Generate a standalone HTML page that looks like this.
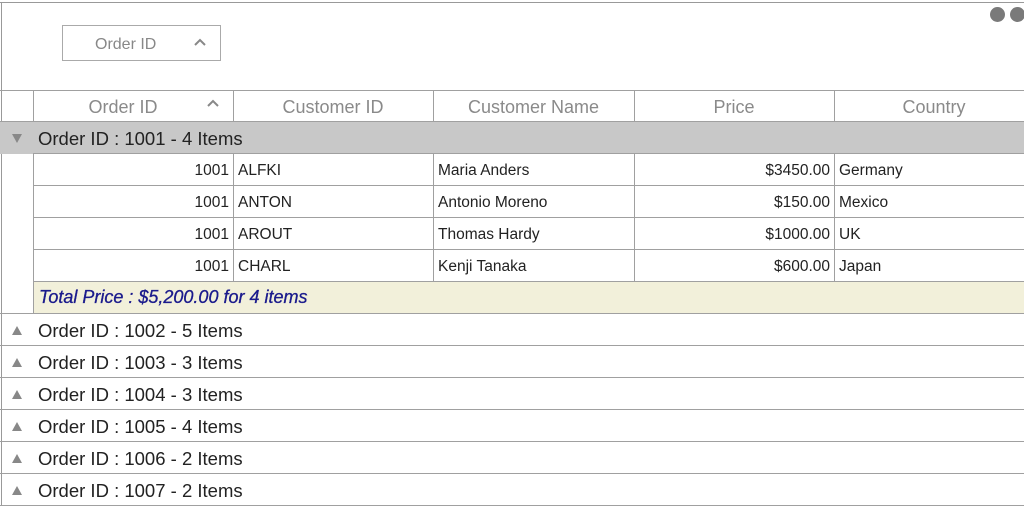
<!DOCTYPE html>
<html><head><style>
*{margin:0;padding:0;box-sizing:border-box}
body{width:1024px;height:506px;overflow:hidden;background:#fff;font-family:"Liberation Sans",sans-serif;position:relative}
.a{position:absolute}
.hl{position:absolute;height:1px;background:#a0a0a0}
.vl{position:absolute;width:1px;background:#a0a0a0}
.h{position:absolute;top:91px;height:32px;line-height:32px;font-size:18px;color:#8a8a8a;text-align:center}
.c{position:absolute;height:32px;line-height:34px;font-size:15.5px;color:#222}
.g{position:absolute;left:0;width:1024px;height:32px;line-height:34px;font-size:18.5px;color:#222}
.g .t{position:absolute;left:38px}
.tri{position:absolute;left:12px;top:12px;width:0;height:0;border-left:5px solid transparent;border-right:5px solid transparent;border-bottom:9px solid #888}
</style></head><body>
<div class="hl" style="top:2px;left:0;width:1024px;background:#999"></div>
<div class="vl" style="left:1px;top:2px;height:504px;background:#999"></div>
<div class="a" style="left:990px;top:7px;width:15px;height:15px;border-radius:50%;background:#7a7a7a"></div>
<div class="a" style="left:1010px;top:7px;width:15px;height:15px;border-radius:50%;background:#7a7a7a"></div>
<div class="a" style="left:62px;top:25px;width:159px;height:36px;border:1px solid #aaa;font-size:16px;color:#888;line-height:37px;padding-left:32px">Order ID</div>
<svg class="a" style="left:193px;top:37px" width="14" height="10"><path d="M2 8L7 3L12 8" stroke="#888" stroke-width="2" fill="none"/></svg>
<div class="hl" style="top:90px;left:0;width:1024px"></div>
<div class="hl" style="top:121px;left:0;width:1024px"></div>
<div class="h" style="left:33px;width:180px">Order ID</div>
<svg class="a" style="left:206px;top:98px" width="14" height="10"><path d="M2 8L7 3L12 8" stroke="#888" stroke-width="2" fill="none"/></svg>
<div class="h" style="left:233px;width:200px">Customer ID</div>
<div class="h" style="left:433px;width:201px">Customer Name</div>
<div class="h" style="left:634px;width:200px">Price</div>
<div class="h" style="left:834px;width:200px">Country</div>
<div class="vl" style="left:33px;top:90px;height:32px"></div>
<div class="vl" style="left:233px;top:90px;height:32px"></div>
<div class="vl" style="left:433px;top:90px;height:32px"></div>
<div class="vl" style="left:634px;top:90px;height:32px"></div>
<div class="vl" style="left:834px;top:90px;height:32px"></div>
<div class="g" style="top:122px;background:#c8c8c8"><div class="tri" style="border-bottom:none;border-top:9px solid #888;top:12px"></div><span class="t">Order ID : 1001 - 4 Items</span></div>
<div class="hl" style="top:153px;left:33px;width:991px"></div>
<div class="vl" style="left:33px;top:154px;height:160px"></div>
<div class="vl" style="left:233px;top:154px;height:128px"></div>
<div class="vl" style="left:433px;top:154px;height:128px"></div>
<div class="vl" style="left:634px;top:154px;height:128px"></div>
<div class="vl" style="left:834px;top:154px;height:128px"></div>
<div class="hl" style="top:185px;left:33px;width:991px"></div>
<div class="hl" style="top:217px;left:33px;width:991px"></div>
<div class="hl" style="top:249px;left:33px;width:991px"></div>
<div class="hl" style="top:281px;left:33px;width:991px"></div>

<div class="c" style="top:154px;left:34px;width:195px;text-align:right">1001</div><div class="c" style="top:154px;left:238px">ALFKI</div><div class="c" style="top:154px;left:438px">Maria Anders</div><div class="c" style="top:154px;left:635px;width:195px;text-align:right">$3450.00</div><div class="c" style="top:154px;left:839px">Germany</div>
<div class="c" style="top:186px;left:34px;width:195px;text-align:right">1001</div><div class="c" style="top:186px;left:238px">ANTON</div><div class="c" style="top:186px;left:438px">Antonio Moreno</div><div class="c" style="top:186px;left:635px;width:195px;text-align:right">$150.00</div><div class="c" style="top:186px;left:839px">Mexico</div>
<div class="c" style="top:218px;left:34px;width:195px;text-align:right">1001</div><div class="c" style="top:218px;left:238px">AROUT</div><div class="c" style="top:218px;left:438px">Thomas Hardy</div><div class="c" style="top:218px;left:635px;width:195px;text-align:right">$1000.00</div><div class="c" style="top:218px;left:839px">UK</div>
<div class="c" style="top:250px;left:34px;width:195px;text-align:right">1001</div><div class="c" style="top:250px;left:238px">CHARL</div><div class="c" style="top:250px;left:438px">Kenji Tanaka</div><div class="c" style="top:250px;left:635px;width:195px;text-align:right">$600.00</div><div class="c" style="top:250px;left:839px">Japan</div>
<div class="a" style="top:282px;left:34px;width:990px;height:31px;background:#f2f0da;color:#1a1a8c;font-style:italic;font-size:18px;line-height:31px;padding-left:5px;-webkit-text-stroke:0.3px #1a1a8c">Total Price : $5,200.00 for 4 items</div>
<div class="hl" style="top:313px;left:0;width:1024px"></div>

<div class="g" style="top:314px"><div class="tri"></div><span class="t">Order ID : 1002 - 5 Items</span></div>
<div class="hl" style="top:345px;left:0;width:1024px"></div>
<div class="g" style="top:346px"><div class="tri"></div><span class="t">Order ID : 1003 - 3 Items</span></div>
<div class="hl" style="top:377px;left:0;width:1024px"></div>
<div class="g" style="top:378px"><div class="tri"></div><span class="t">Order ID : 1004 - 3 Items</span></div>
<div class="hl" style="top:409px;left:0;width:1024px"></div>
<div class="g" style="top:410px"><div class="tri"></div><span class="t">Order ID : 1005 - 4 Items</span></div>
<div class="hl" style="top:441px;left:0;width:1024px"></div>
<div class="g" style="top:442px"><div class="tri"></div><span class="t">Order ID : 1006 - 2 Items</span></div>
<div class="hl" style="top:473px;left:0;width:1024px"></div>
<div class="g" style="top:474px"><div class="tri"></div><span class="t">Order ID : 1007 - 2 Items</span></div>
<div class="hl" style="top:505px;left:0;width:1024px"></div>
</body></html>
